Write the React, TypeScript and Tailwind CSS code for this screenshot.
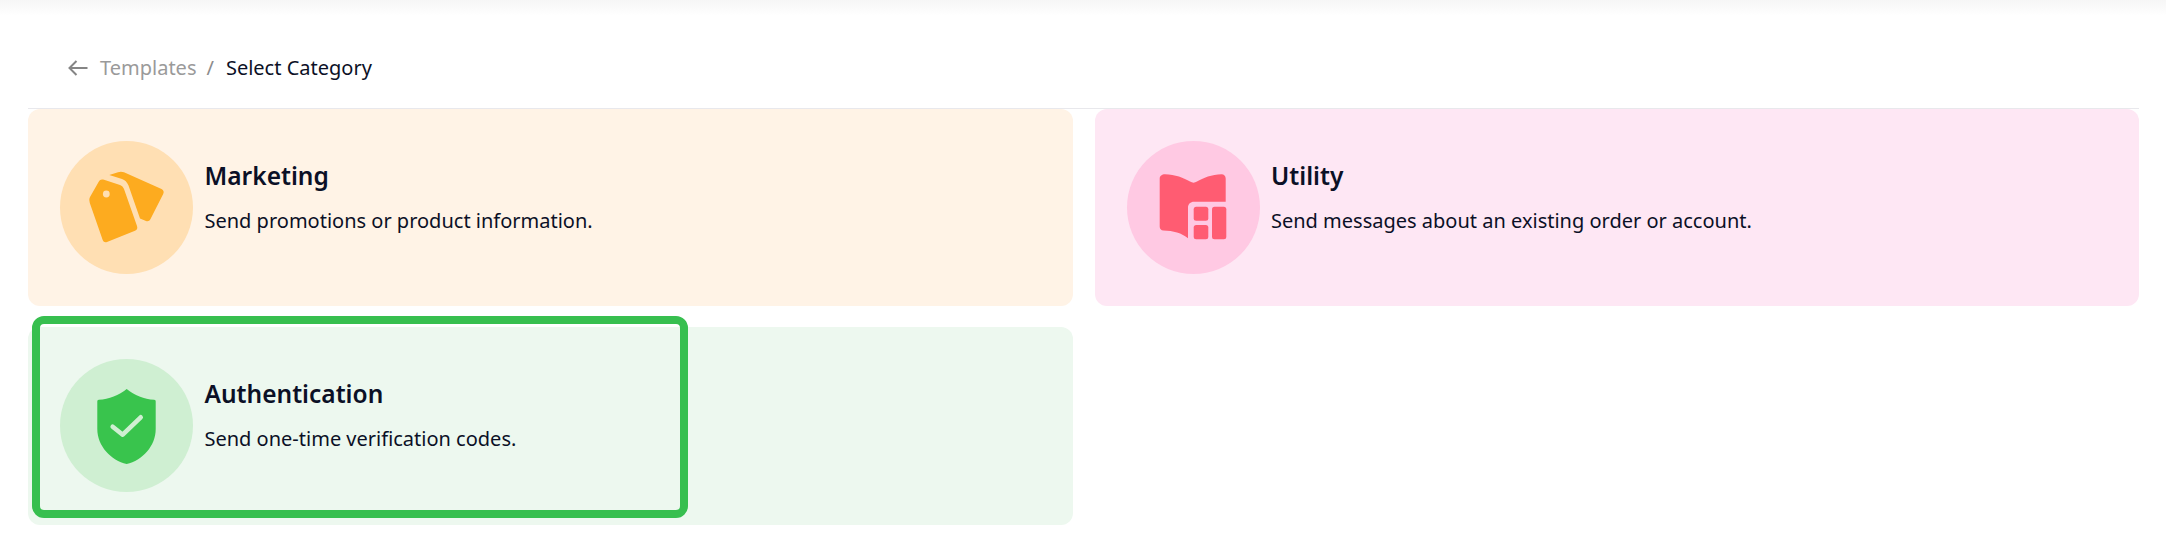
import type { ReactNode } from "react";

const font = { fontFamily: '"Noto Sans", "Open Sans", sans-serif' };

function TagsIcon() {
  return (
    <svg viewBox="0 0 133 133" className="h-full w-full" fill="#fdab1f">
      <path d="M49.3 34 L58 31.2 C60 30.5 62 30.5 64 31.3 L101.5 48 C103.7 49 104.2 51 103.2 53 L90.5 78 C89.5 80 88 80.5 86 80 L80 77.5 L68.5 44.5 C67 41 65 39 62 38 Z" />
      <path d="M29.3 59 C29.3 58 29.5 57 30 56 L38 42 C39.5 39 41 38 44 38.8 L60 44 C62 44.7 63.2 46 64 48 L77 85 C77.8 87.5 77 89 75 89.8 L47 101 C45 101.5 43.5 101 42.7 99 L29.8 62 Z" />
      <circle cx="46.3" cy="53" r="3.4" fill="#ffdfb3" />
    </svg>
  );
}

function BookIcon() {
  return (
    <svg viewBox="0 0 133 133" className="h-full w-full" fill="#ff5c72">
      <path d="M32.7 37.5 C32.7 35 35 33.3 38 33.3 C48 33.5 57 37 63 40.5 C65.5 42 67.5 42 70 40.5 C76 37 85 33.5 94.5 33.3 C97 33.3 98.7 35 98.7 37.5 L98.7 60.7 L67 60.7 C63.5 60.7 61 63 61 66.5 L61 97.3 C55 92 46 89.8 36.5 89.5 C34 89.3 32.7 88 32.7 85.5 Z" />
      <rect x="66.7" y="65.7" width="14.6" height="14" rx="2.5" />
      <rect x="66.7" y="84" width="14.6" height="14.3" rx="2.5" />
      <rect x="85" y="65.7" width="14.3" height="32.6" rx="2.5" />
    </svg>
  );
}

function ShieldIcon() {
  return (
    <svg viewBox="0 0 133 133" className="h-full w-full">
      <path
        d="M66.7 30 C59 36 49 40.5 38.8 40.8 C37.8 40.9 37.3 41.4 37.3 42.4 L37.3 70 C37.3 87 51 101.5 66.7 105 C82.4 101.5 95.7 87 95.7 70 L95.7 42.4 C95.7 41.4 95.2 40.9 94.2 40.8 C84 40.5 74.4 36 66.7 30 Z"
        fill="#39c44d"
      />
      <path
        d="M52.7 67.7 L62.7 75.7 L80.7 58.3"
        fill="none"
        stroke="#cfefd2"
        strokeWidth="4.6"
        strokeLinecap="round"
        strokeLinejoin="round"
      />
    </svg>
  );
}

interface CategoryCardProps {
  title: string;
  description: string;
  cardClass: string;
  circleClass: string;
  icon: ReactNode;
}

function CategoryCard({ title, description, cardClass, circleClass, icon }: CategoryCardProps) {
  return (
    <div className={`flex items-start gap-[11.5px] rounded-[12px] pl-[32px] pt-[32px] ${cardClass}`}>
      <div className={`h-[133px] w-[133px] shrink-0 rounded-full ${circleClass}`}>{icon}</div>
      <div className="flex flex-col pt-[18px] text-[#0b1026]">
        <h3 className="mb-[14px] text-[24.5px] leading-[34px] font-semibold">{title}</h3>
        <p className="text-[20px] leading-[28px]">{description}</p>
      </div>
    </div>
  );
}

export default function App() {
  return (
    <div className="min-h-[546px] bg-white" style={font}>
      <div className="h-[16px] bg-gradient-to-b from-[#f6f6f6] to-white" />
      <div className="flex h-[92px] items-start pl-[68px] pt-[38px]">
        <div className="flex items-center text-[20px] leading-[28px]">
          <svg viewBox="0 0 20 16" className="h-[16px] w-[20px] text-[#858585]" fill="none">
            <path d="M19.5 8 H2 M8.5 1 L1.5 8 L8.5 15" stroke="currentColor" strokeWidth="2" />
          </svg>
          <span className="ml-[12px] text-[#9a9a9a]">Templates</span>
          <span className="ml-[10px] mr-[12px] text-[#8c8c8c]">/</span>
          <span className="text-[#0b1026]">Select Category</span>
        </div>
      </div>
      <div className="ml-[28px] mr-[27px] border-t border-[#e8e8ec]">
        <div className="grid grid-cols-2 gap-x-[22px] gap-y-[21px]">
          <CategoryCard
            title="Marketing"
            description="Send promotions or product information."
            cardClass="h-[197px] bg-[#fff3e6]"
            circleClass="bg-[#ffdfb3]"
            icon={<TagsIcon />}
          />
          <CategoryCard
            title="Utility"
            description="Send messages about an existing order or account."
            cardClass="h-[197px] bg-[#fee7f4]"
            circleClass="bg-[#ffc9e3]"
            icon={<BookIcon />}
          />
          <div className="relative">
            <CategoryCard
              title="Authentication"
              description="Send one-time verification codes."
              cardClass="h-[198px] bg-[#edf8ef]"
              circleClass="bg-[#cfefd2]"
              icon={<ShieldIcon />}
            />
            {/* green highlight frame over the card */}
            <div className="absolute left-[4px] top-[-11px] h-[202px] w-[656px] rounded-[12px] border-[8px] border-[#37bf4f]" />
          </div>
        </div>
      </div>
    </div>
  );
}
